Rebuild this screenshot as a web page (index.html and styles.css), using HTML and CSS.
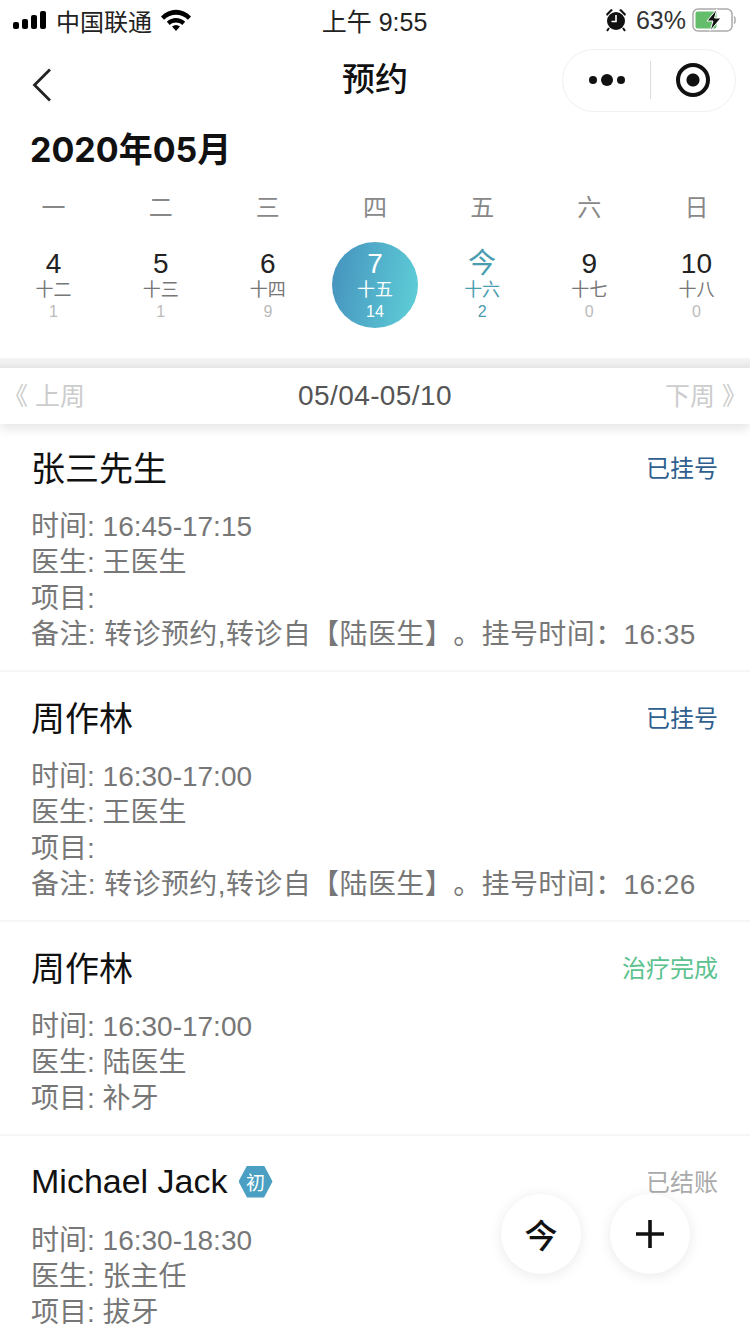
FILE: index.html
```html
<!DOCTYPE html>
<html lang="zh-CN">
<head>
    <meta charset="UTF-8">
    <meta name="viewport" content="width=device-width, initial-scale=1.0">
    <title>预约</title>
    <link rel="stylesheet" href="styles.css">
</head>
<body>

<div class="page">
    <div class="status-bar">
        <div class="status-left">
            <svg class="signal" width="34" height="18" viewBox="0 0 34 18">
                <rect x="0" y="11" width="6" height="7" rx="2"/>
                <rect x="9" y="8" width="6" height="10" rx="2"/>
                <rect x="18" y="4" width="6" height="14" rx="2"/>
                <rect x="27" y="0" width="6" height="18" rx="2"/>
            </svg>
            <span>中国联通</span>
            <svg class="wifi" width="30" height="22" viewBox="0 0 30 22">
                <path d="M0 7.500C8.500-1.500 21.500-1.500 30 7.500l-3 3.200C20 4.200 10 4.200 3 10.700z"/>
                <path d="M5.800 12.800C11.500 7.800 18.500 7.800 24.200 12.800l-3 3.200C17.500 12.800 12.500 12.800 8.800 16z"/>
                <path d="M11 17.600c2.500-2 5.500-2 8 0L15 22z"/>
            </svg>
        </div>
        <div class="status-time">上午 9:55</div>
        <div class="status-right">
            <svg class="alarm" width="22" height="24" viewBox="0 0 22 24">
                <circle cx="11" cy="13" r="9"/>
                <path d="M1 6l5-5 2 1-6 6zM21 6l-5-5-2 1 6 6z"/>
                <path d="M4 20l-2 3M18 20l2 3" stroke="#111" stroke-width="2"/>
                <path d="M11 7v6.500H6.500" fill="none" stroke="#fff" stroke-width="1.600"/>
            </svg>
            <span>63%</span>
            <svg class="battery" width="44" height="24" viewBox="0 0 44 24">
                <rect x="1" y="1" width="39" height="22" rx="5" fill="none" stroke="#aaa" stroke-width="1.500"/>
                <rect x="3.500" y="3.500" width="21" height="17" rx="2" fill="#63bd6a"/>
                <path d="M42 8.500c1.500 1 1.500 6 0 7" fill="none" stroke="#aaa" stroke-width="1.500"/>
                <path d="M25 1l-10 12h6l-3 10 11-13h-6.500z" fill="#111" stroke="#fff" stroke-width="1"/>
            </svg>
        </div>
    </div>

    <div class="nav">
        <svg class="back" width="20" height="34" viewBox="0 0 20 34">
            <path d="M18 1.500L2.500 17 18 32.500" fill="none" stroke="#222" stroke-width="2.800"/>
        </svg>
        <h1 class="nav-title">预约</h1>
        <div class="capsule">
            <div class="capsule-more">
                <span class="dot"></span>
                <span class="dot dot-big"></span>
                <span class="dot"></span>
            </div>
            <div class="capsule-line"></div>
            <div class="capsule-close"><span></span></div>
        </div>
    </div>

    <div class="month">2020年05月</div>

    <div class="week-row">
        <div>一</div>
        <div>二</div>
        <div>三</div>
        <div>四</div>
        <div>五</div>
        <div>六</div>
        <div>日</div>
    </div>

    <div class="days">
        <div class="day"><div class="day-num">4</div><div class="day-lunar">十二</div><div class="day-count">1</div></div>
        <div class="day"><div class="day-num">5</div><div class="day-lunar">十三</div><div class="day-count">1</div></div>
        <div class="day"><div class="day-num">6</div><div class="day-lunar">十四</div><div class="day-count">9</div></div>
        <div class="day selected"><div class="day-num">7</div><div class="day-lunar">十五</div><div class="day-count">14</div></div>
        <div class="day today"><div class="day-num">今</div><div class="day-lunar">十六</div><div class="day-count">2</div></div>
        <div class="day"><div class="day-num">9</div><div class="day-lunar">十七</div><div class="day-count">0</div></div>
        <div class="day"><div class="day-num">10</div><div class="day-lunar">十八</div><div class="day-count">0</div></div>
    </div>

    <div class="band"></div>

    <div class="week-bar">
        <div class="week-link">《 上周</div>
        <div class="week-range">05/04-05/10</div>
        <div class="week-link">下周 》</div>
    </div>

    <div class="list">
        <div class="item">
            <div class="item-head">
                <div class="item-name">张三先生</div>
                <div class="item-status blue">已挂号</div>
            </div>
            <div class="item-info">
                <div>时间: 16:45-17:15</div>
                <div>医生: 王医生</div>
                <div>项目:</div>
                <div class="item-note">备注: 转诊预约,转诊自【陆医生】。挂号时间：16:35</div>
            </div>
        </div>
        <div class="item">
            <div class="item-head">
                <div class="item-name">周作林</div>
                <div class="item-status blue">已挂号</div>
            </div>
            <div class="item-info">
                <div>时间: 16:30-17:00</div>
                <div>医生: 王医生</div>
                <div>项目:</div>
                <div class="item-note">备注: 转诊预约,转诊自【陆医生】。挂号时间：16:26</div>
            </div>
        </div>
        <div class="item">
            <div class="item-head">
                <div class="item-name">周作林</div>
                <div class="item-status green">治疗完成</div>
            </div>
            <div class="item-info">
                <div>时间: 16:30-17:00</div>
                <div>医生: 陆医生</div>
                <div>项目: 补牙</div>
            </div>
        </div>
        <div class="item">
            <div class="item-head">
                <div class="item-name latin">Michael Jack <span class="badge">初</span></div>
                <div class="item-status gray">已结账</div>
            </div>
            <div class="item-info">
                <div>时间: 16:30-18:30</div>
                <div>医生: 张主任</div>
                <div>项目: 拔牙</div>
            </div>
        </div>
    </div>

    <div class="float-buttons">
        <div class="float-button">今</div>
        <div class="float-button">
            <svg width="30" height="30" viewBox="0 0 30 30">
                <path d="M15 1v28M1 15h28" stroke="#111" stroke-width="3.600"/>
            </svg>
        </div>
    </div>
</div>

</body>
</html>
```

FILE: styles.css
```css
* {
    box-sizing: border-box;
}

body {
    margin: 0;
    background: #fff;
    font-family: "Liberation Sans", "Noto Sans CJK SC", sans-serif;
    color: #111;
    text-spacing-trim: space-all;
}

.page {
    position: relative;
    width: 750px;
    height: 1334px;
    overflow: hidden;
    background: #fff;
}

.status-bar {
    display: grid;
    grid-template-columns: 1fr auto 1fr;
    align-items: center;
    height: 40px;
    padding: 0 14px 0 13px;
    font-size: 24px;
    color: #222;
}

.status-left {
    display: flex;
    align-items: center;
    gap: 9px;
}

.status-right {
    display: flex;
    align-items: center;
    justify-content: flex-end;
    gap: 6px;
    font-size: 25px;
    color: #333;
}

.alarm {
    margin-right: 3px;
    fill: #111;
}

.status-time {
    font-size: 25px;
}

.nav {
    display: grid;
    grid-template-columns: 174px 1fr 174px;
    align-items: center;
    height: 79px;
    padding: 0 14px;
}

.back {
    margin: 9px 0 0 18px;
}

.nav-title {
    margin: 0;
    font-size: 33px;
    font-weight: 500;
    line-height: 80px;
    text-align: center;
}

.capsule {
    display: flex;
    align-items: center;
    justify-self: end;
    width: 174px;
    height: 63px;
    border: 1px solid #f0f0f0;
    border-radius: 32px;
}

.capsule-more {
    display: flex;
    align-items: center;
    justify-content: center;
    gap: 4px;
    width: 87px;
}

.dot {
    width: 8px;
    height: 8px;
    border-radius: 50%;
    background: #111;
}

.dot-big {
    width: 12px;
    height: 12px;
}

.capsule-line {
    width: 1px;
    height: 38px;
    background: #ddd;
}

.capsule-close {
    display: flex;
    align-items: center;
    justify-content: center;
    flex: 1;
}

.capsule-close span {
    display: flex;
    width: 34px;
    height: 34px;
    border: 4px solid #111;
    border-radius: 50%;
    background: radial-gradient(circle, #111 0, #111 6px, #fff 7px);
}

.month {
    height: 54px;
    padding-left: 30px;
    font-family: Inter, "Noto Sans CJK SC", sans-serif;
    font-size: 34px;
    font-weight: bold;
    line-height: 62px;
    color: #111;
}

.week-row {
    display: grid;
    grid-template-columns: repeat(7, 1fr);
    margin-top: 15px;
    font-size: 24px;
    line-height: 40px;
    text-align: center;
    color: #888;
}

.days {
    display: grid;
    grid-template-columns: repeat(7, 1fr);
    justify-items: center;
    height: 116px;
    margin-top: 14px;
}

.day {
    display: flex;
    flex-direction: column;
    align-items: center;
    width: 86px;
    height: 86px;
    padding-top: 6px;
    border-radius: 50%;
}

.day-num {
    font-size: 28px;
    line-height: 32px;
    color: #222;
}

.day-lunar {
    font-size: 18px;
    line-height: 20px;
    color: #777;
}

.day-count {
    margin-top: 1px;
    font-size: 16px;
    line-height: 22px;
    color: #bbb;
}

.selected {
    background: linear-gradient(100deg, #4591bd, #5fd0d8);
}

.selected .day-num,
.selected .day-lunar,
.selected .day-count {
    color: #fff;
}

.today .day-num,
.today .day-lunar,
.today .day-count {
    color: #4a9db0;
}

.band {
    height: 10px;
    background: linear-gradient(#f5f5f5, #e8e8e8);
}

.week-bar {
    position: relative;
    z-index: 1;
    display: flex;
    align-items: center;
    justify-content: space-between;
    height: 56px;
    padding: 0 3px;
    background: #fff;
    box-shadow: 0 5px 10px rgba(0, 0, 0, 0.1);
}

.week-link {
    padding-bottom: 5px;
    font-size: 25px;
    color: #ccc;
}

.week-range {
    font-size: 28px;
    letter-spacing: 0.4px;
    color: #555;
}

.item {
    padding: 20px 32px 17px 31px;
    border-bottom: 2px solid #f6f6f6;
}

.item:first-child {
    padding-top: 18px;
}

.item-head {
    display: flex;
    align-items: center;
    justify-content: space-between;
    height: 48px;
}

.item-name {
    display: flex;
    align-items: center;
    gap: 11px;
    font-size: 34px;
    color: #111;
}

.latin {
    padding-top: 3px;
}

.item-status {
    font-size: 24px;
}

.blue {
    color: #2f5f8f;
}

.green {
    color: #5cc28f;
}

.gray {
    color: #aaa;
}

.badge {
    display: flex;
    align-items: center;
    justify-content: center;
    width: 34px;
    height: 32px;
    background: #4a9fc2;
    clip-path: polygon(25% 0, 75% 0, 100% 50%, 75% 100%, 25% 100%, 0 50%);
    font-size: 19px;
    color: #fff;
}

.item-info {
    margin-top: 19px;
    font-size: 28px;
    line-height: 36px;
    color: #777;
}

.item-note {
    letter-spacing: 0.4px;
}

.float-buttons {
    position: absolute;
    right: 60px;
    top: 1194px;
    display: flex;
    gap: 29px;
}

.float-button {
    display: flex;
    align-items: center;
    justify-content: center;
    width: 80px;
    height: 80px;
    border-radius: 50%;
    background: #fff;
    box-shadow: 0 2px 14px rgba(0, 0, 0, 0.09);
    font-size: 33px;
    font-weight: 500;
    color: #111;
}
```
